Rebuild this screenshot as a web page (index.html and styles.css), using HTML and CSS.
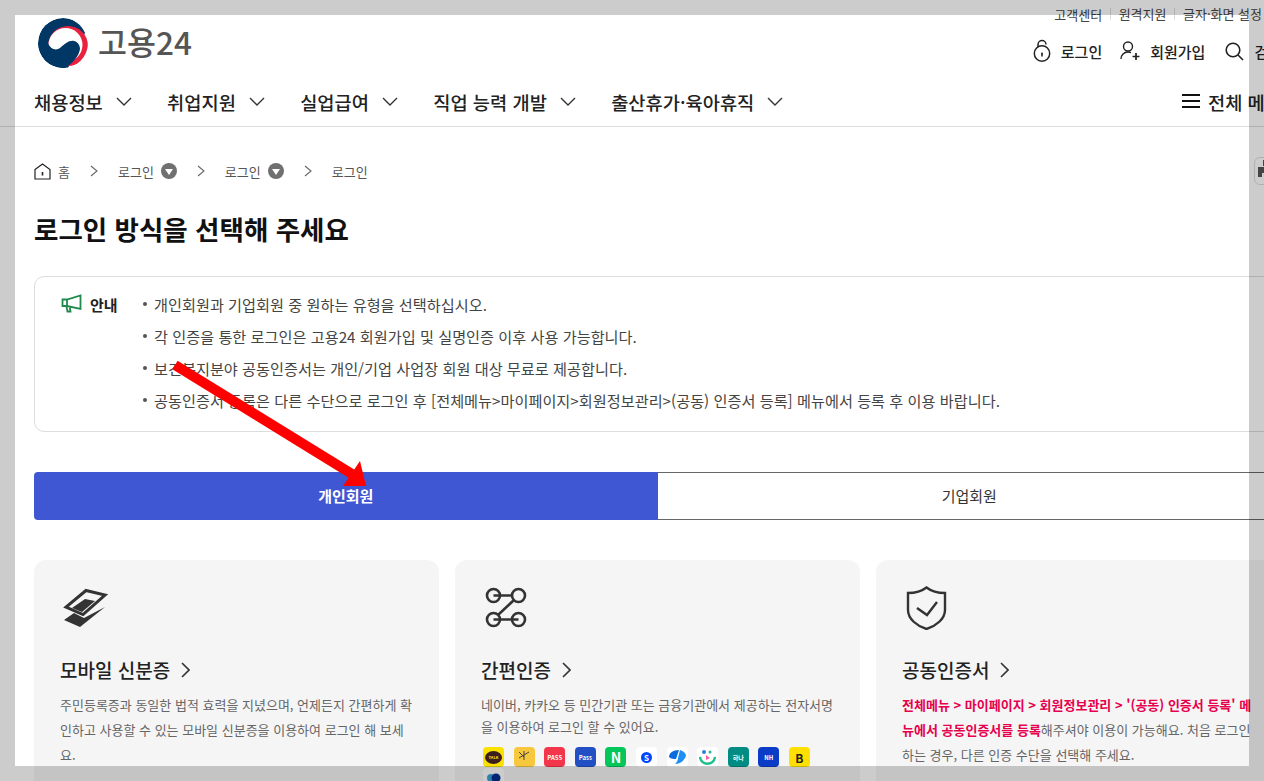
FILE: index.html
```html
<!DOCTYPE html>
<html lang="ko">
<head>
    <meta charset="utf-8">
    <title>고용24 로그인</title>
    <link rel="stylesheet" href="styles.css">
</head>
<body>
    <div class="header">
        <div class="header-inner">
            <div class="header-top">
                <a href="#" class="logo">
                    <svg class="logo-mark" width="50" height="50" viewBox="0 0 50 50">
                        <defs><clipPath id="logoDisk"><circle cx="25" cy="25" r="25"/></clipPath></defs>
                        <g clip-path="url(#logoDisk)">
                            <rect width="50" height="50" fill="#fff"/>
                            <path d="M0 25A25 25 0 0 1 25 0C35 0 43 6 47 15L30 50H25A25 25 0 0 1 0 25Z" fill="#003764"/>
                            <circle cx="30" cy="28" r="20" fill="#e8213f"/>
                            <circle cx="27.5" cy="27" r="17" fill="#fff"/>
                            <path d="M0 25H10C12 31 18 33 22 30C27 26 31 22 36 23C41 24 42 29 42 31C41 38 35 45 27 50H25A25 25 0 0 1 0 25Z" fill="#003764"/>
                        </g>
                    </svg>
                    <span class="logo-text">고용24</span>
                </a>
                <div class="header-right">
                    <ul class="util-menu">
                        <li class="util-item">고객센터</li>
                        <li class="util-item">원격지원</li>
                        <li class="util-item">글자·화면 설정</li>
                    </ul>
                    <div class="member-menu">
                        <a href="#" class="member-link">
                            <svg width="18" height="24" viewBox="0 0 18 24" fill="none" stroke="#222" stroke-width="1.5">
                                <circle cx="9" cy="14.5" r="7.7"/>
                                <path d="M5 8V5.5a4 4 0 0 1 8 0"/>
                                <circle cx="9" cy="14.5" r="1" fill="#222" stroke="none"/>
                                <path d="M9 15v2.5"/>
                            </svg>
                            로그인
                        </a>
                        <a href="#" class="member-link member-join">
                            <svg width="20" height="20" viewBox="0 0 20 20" fill="none" stroke="#222" stroke-width="1.4">
                                <circle cx="8" cy="5.5" r="4.5"/>
                                <path d="M1 18c0-4 3-7 7-7 1 0 2 .2 3 .6"/>
                                <path d="M12.5 15.5h7M16 12v7" stroke-width="1.7"/>
                            </svg>
                            회원가입
                        </a>
                        <a href="#" class="member-link member-search">
                            <svg width="19" height="19" viewBox="0 0 19 19" fill="none" stroke="#222" stroke-width="1.6">
                                <circle cx="8" cy="8" r="6.8"/>
                                <path d="M13 13l5 5"/>
                            </svg>
                            검색
                        </a>
                    </div>
                </div>
            </div>
            <div class="nav">
                <ul class="nav-menu">
                    <li class="nav-item">채용정보<svg class="nav-caret" width="16" height="9" viewBox="0 0 16 9" fill="none" stroke="#333" stroke-width="1.4"><path d="M1 1l7 7 7-7"/></svg></li>
                    <li class="nav-item">취업지원<svg class="nav-caret" width="16" height="9" viewBox="0 0 16 9" fill="none" stroke="#333" stroke-width="1.4"><path d="M1 1l7 7 7-7"/></svg></li>
                    <li class="nav-item">실업급여<svg class="nav-caret" width="16" height="9" viewBox="0 0 16 9" fill="none" stroke="#333" stroke-width="1.4"><path d="M1 1l7 7 7-7"/></svg></li>
                    <li class="nav-item">직업 능력 개발<svg class="nav-caret" width="16" height="9" viewBox="0 0 16 9" fill="none" stroke="#333" stroke-width="1.4"><path d="M1 1l7 7 7-7"/></svg></li>
                    <li class="nav-item">출산휴가·육아휴직<svg class="nav-caret" width="16" height="9" viewBox="0 0 16 9" fill="none" stroke="#333" stroke-width="1.4"><path d="M1 1l7 7 7-7"/></svg></li>
                </ul>
                <a href="#" class="nav-all">
                    <svg width="18" height="14" viewBox="0 0 18 14" stroke="#111" stroke-width="2"><path d="M0 1h18M0 7h18M0 13h18"/></svg>
                    전체 메뉴
                </a>
            </div>
        </div>
    </div>

    <div class="content">
        <div class="breadcrumb">
            <span class="crumb crumb-home">
                <svg width="17" height="17" viewBox="0 0 17 17" fill="none" stroke="#222" stroke-width="1.2">
                    <path d="M1 6.500L8.500 1 16 6.500V16H1Z"/>
                    <path d="M8.500 9v3.500" stroke-width="1.600"/>
                </svg>
                홈
            </span>
            <svg class="crumb-sep" width="8" height="12" viewBox="0 0 8 12" fill="none" stroke="#666" stroke-width="1.1"><path d="M1 1l6 5-6 5"/></svg>
            <span class="crumb">로그인<span class="crumb-drop"></span></span>
            <svg class="crumb-sep" width="8" height="12" viewBox="0 0 8 12" fill="none" stroke="#666" stroke-width="1.1"><path d="M1 1l6 5-6 5"/></svg>
            <span class="crumb">로그인<span class="crumb-drop"></span></span>
            <svg class="crumb-sep" width="8" height="12" viewBox="0 0 8 12" fill="none" stroke="#666" stroke-width="1.1"><path d="M1 1l6 5-6 5"/></svg>
            <span class="crumb">로그인</span>
            <span class="print-button">
                <svg width="24" height="24" viewBox="0 0 24 24" fill="#555">
                    <path d="M6 1h12v6H6zM1 8h22v10h-4v-4H5v4H1zM7 16h10v7H7z"/>
                </svg>
            </span>
        </div>

        <h2 class="page-title">로그인 방식을 선택해 주세요</h2>

        <div class="notice">
            <div class="notice-label">
                <svg width="21" height="20" viewBox="0 0 21 20" fill="none" stroke="#1f8a4c" stroke-width="1.800">
                    <path d="M19.500 1.500v13.500L6 12H1.500V5.500H6Z"/>
                    <path d="M6 5.500V12M5.500 12.500l1 5h3l-.7-4"/>
                </svg>
                안내
            </div>
            <ul class="notice-list">
                <li class="notice-item">개인회원과 기업회원 중 원하는 유형을 선택하십시오.</li>
                <li class="notice-item">각 인증을 통한 로그인은 고용24 회원가입 및 실명인증 이후 사용 가능합니다.</li>
                <li class="notice-item">보건복지분야 공동인증서는 개인/기업 사업장 회원 대상 무료로 제공합니다.</li>
                <li class="notice-item">공동인증서 등록은 다른 수단으로 로그인 후 [전체메뉴&gt;마이페이지&gt;회원정보관리&gt;(공동) 인증서 등록] 메뉴에서 등록 후 이용 바랍니다.</li>
            </ul>
        </div>

        <div class="tabs">
            <a href="#" class="tab tab-active">개인회원</a>
            <a href="#" class="tab">기업회원</a>
        </div>

        <div class="cards">
            <div class="card">
                <svg class="card-icon" width="50" height="44" viewBox="0 0 50 44">
                    <path d="M4 34L14 27 24 32 45 21 20 41Z" fill="#333"/>
                    <path d="M26 4.500L45 9 23 28.500 6 21Z" fill="none" stroke="#333" stroke-width="3"/>
                    <path d="M25 13L35 15 22 26 12 22Z" fill="#333"/>
                </svg>
                <div class="card-title">모바일 신분증<svg width="9" height="16" viewBox="0 0 9 16" fill="none" stroke="#333" stroke-width="1.600"><path d="M1 1l7 7-7 7"/></svg></div>
                <p class="card-text">주민등록증과 동일한 법적 효력을 지녔으며, 언제든지 간편하게 확인하고 사용할 수 있는 모바일 신분증을 이용하여 로그인 해 보세요.</p>
            </div>
            <div class="card">
                <svg class="card-icon" width="50" height="44" viewBox="0 0 50 44" fill="none" stroke="#333" stroke-width="2.600">
                    <circle cx="12.500" cy="9.500" r="6.500"/>
                    <circle cx="37.500" cy="9.500" r="6.500"/>
                    <circle cx="12.500" cy="33.500" r="6.500"/>
                    <circle cx="37.500" cy="33.500" r="6.500"/>
                    <path d="M12.500 9.500H31M33 14L17 29M12.500 33.500H37.500"/>
                </svg>
                <div class="card-title">간편인증<svg width="9" height="16" viewBox="0 0 9 16" fill="none" stroke="#333" stroke-width="1.600"><path d="M1 1l7 7-7 7"/></svg></div>
                <p class="card-text card-text-tight">네이버, 카카오 등 민간기관 또는 금융기관에서 제공하는 전자서명을 이용하여 로그인 할 수 있어요.</p>
                <div class="badges">
                    <span class="badge badge-kakao"><span class="badge-bubble">TALK</span></span>
                    <span class="badge badge-kb">
                        <svg width="15" height="15" viewBox="0 0 15 15" fill="none" stroke="#444" stroke-width="1"><path d="M2 2l5 5M7 1v9M12 2L2 8"/></svg>
                    </span>
                    <span class="badge badge-pass">PASS</span>
                    <span class="badge badge-samsung">Pass</span>
                    <span class="badge badge-naver">N</span>
                    <span class="badge badge-shinhan"><span class="badge-disc">S</span></span>
                    <span class="badge badge-white">
                        <svg width="17" height="14" viewBox="0 0 17 14"><path d="M10 0C4 0 0 3 0 7c2 2 5 2 7 2Z" fill="#0a6be0"/><path d="M11 0c3 1 6 3 6 6-2 5-6 8-11 8 2-2 3-4 3-6Z" fill="#1e90f5"/></svg>
                    </span>
                    <span class="badge badge-white">
                        <svg width="17" height="16" viewBox="0 0 17 16"><circle cx="5" cy="3" r="2" fill="#2a7de1"/><circle cx="11" cy="3" r="1.500" fill="#26b5a0"/><path d="M1 8c1 9 14 9 15 0" fill="none" stroke="#1cc08c" stroke-width="2.400"/><path d="M7 6l4 3-4 2Z" fill="#f062a0"/></svg>
                    </span>
                    <span class="badge badge-hana">하나</span>
                    <span class="badge badge-nh">NH</span>
                    <span class="badge badge-b">B</span>
                    <span class="badge badge-last">
                        <svg width="16" height="10" viewBox="0 0 16 10"><circle cx="5" cy="5" r="4" fill="#3ba3dc"/><circle cx="10" cy="5" r="4.500" fill="#00308f"/></svg>
                    </span>
                </div>
            </div>
            <div class="card">
                <svg class="card-icon" width="50" height="44" viewBox="0 0 50 44" fill="none" stroke="#333" stroke-width="2.400">
                    <path d="M24.500 1.500C29 5 35 7 43 7V24C43 33 34 40 24.500 43 15 40 6 33 6 24V7C14 7 20 5 24.500 1.500Z"/>
                    <path d="M15 22l10 7 10-13"/>
                </svg>
                <div class="card-title">공동인증서<svg width="9" height="16" viewBox="0 0 9 16" fill="none" stroke="#333" stroke-width="1.600"><path d="M1 1l7 7-7 7"/></svg></div>
                <p class="card-text"><strong class="card-strong">전체메뉴 &gt; 마이페이지 &gt; 회원정보관리 &gt; '(공동) 인증서 등록' 메뉴에서 공동인증서를 등록</strong>해주셔야 이용이 가능해요. 처음 로그인하는 경우, 다른 인증 수단을 선택해 주세요.</p>
            </div>
        </div>
    </div>

    <svg class="arrow" width="1264" height="781" viewBox="0 0 1264 781">
        <path d="M175 365L352 474" stroke="#f00" stroke-width="10" fill="none"/>
        <path d="M360 461L366 486 343 486Z" fill="#f00"/>
    </svg>

    <div class="frame frame-top"></div>
    <div class="frame frame-left"></div>
    <div class="frame frame-right"></div>
    <div class="frame frame-bottom"></div>
</body>
</html>
```

FILE: styles.css
```css
* {
    box-sizing: border-box;
}

html,
body {
    width: 1264px;
    height: 781px;
    overflow: hidden;
}

body {
    margin: 0;
    padding: 0;
    position: relative;
    background-color: #fff;
    color: #222;
    font-family: "Noto Sans CJK KR", "Noto Sans", sans-serif;
}

a {
    color: inherit;
    text-decoration: none;
}

ul {
    list-style: none;
    margin: 0;
    padding: 0;
}

.header {
    height: 127px;
    border-bottom: 1px solid #ddd;
}

.header-inner {
    width: 1248px;
    margin-left: 34px;
}

.header-top {
    display: flex;
    justify-content: space-between;
    height: 78px;
}

.logo {
    display: flex;
    align-items: center;
    height: 50px;
    margin-top: 18px;
    margin-left: 4px;
}

.logo-text {
    margin-left: 10px;
    margin-bottom: 5px;
    font-size: 31.5px;
    font-weight: 500;
    color: #555;
}

.header-right {
    display: flex;
    flex-direction: column;
    align-items: flex-end;
}

.util-menu {
    display: flex;
    align-items: center;
    height: 28px;
    padding-right: 20px;
    font-size: 13px;
    color: #444;
}

.util-item + .util-item {
    margin-left: 7.5px;
    padding-left: 8px;
    border-left: 1px solid #ddd;
    line-height: 12px;
}

.member-menu {
    display: flex;
    align-items: center;
    height: 28px;
    margin-top: 9px;
    font-size: 15px;
    font-weight: 500;
}

.member-link {
    display: flex;
    align-items: center;
    gap: 10px;
}

.member-join {
    margin-left: 18px;
}

.member-search {
    margin-left: 20px;
}

.nav {
    display: flex;
    justify-content: space-between;
    align-items: center;
    height: 48px;
    padding-bottom: 2px;
    font-size: 18.7px;
    font-weight: 500;
}

.nav-menu {
    display: flex;
    gap: 35.3px;
}

.nav-item {
    display: flex;
    align-items: center;
    gap: 13px;
}

.nav-all {
    display: flex;
    align-items: center;
    gap: 8px;
}

.content {
    width: 1248px;
    margin-left: 34px;
}

.breadcrumb {
    display: flex;
    align-items: center;
    height: 24px;
    margin-top: 32px;
    font-size: 13px;
    color: #555;
}

.crumb {
    display: flex;
    align-items: center;
    gap: 7px;
}

.crumb-sep {
    margin: 0 20px;
}

.crumb-drop {
    position: relative;
    width: 16px;
    height: 16px;
    border-radius: 50%;
    background-color: #707070;
}

.crumb-drop::after {
    content: "";
    position: absolute;
    top: 6px;
    left: 4px;
    border-top: 6px solid #fff;
    border-left: 4px solid transparent;
    border-right: 4px solid transparent;
}

.print-button {
    display: flex;
    align-items: center;
    justify-content: center;
    width: 30px;
    height: 28px;
    margin-left: auto;
    margin-right: -2px;
    border: 1px solid #ddd;
    border-radius: 6px;
}

.page-title {
    margin: 27px 0 0;
    font-size: 26.5px;
    line-height: 38px;
    font-weight: 700;
    color: #111;
}

.notice {
    display: flex;
    height: 156px;
    margin-top: 28px;
    padding: 11px 26px;
    border: 1px solid #ddd;
    border-radius: 10px;
}

.notice-label {
    display: flex;
    align-items: center;
    gap: 8px;
    width: 81px;
    height: 32px;
    font-size: 15px;
    font-weight: 700;
}

.notice-list {
    font-size: 15.2px;
    color: #444;
}

.notice-item {
    position: relative;
    height: 32px;
    line-height: 32px;
    padding-left: 12px;
    white-space: nowrap;
}

.notice-item::before {
    content: "";
    position: absolute;
    top: 14px;
    left: 1px;
    width: 4px;
    height: 4px;
    border-radius: 50%;
    background-color: #555;
}

.tabs {
    display: flex;
    height: 48px;
    margin-top: 40px;
}

.tab {
    flex: 1;
    display: flex;
    align-items: center;
    justify-content: center;
    padding-bottom: 2px;
    border: 1px solid #666;
    border-left: none;
    font-size: 15px;
    color: #333;
}

.tab-active {
    border: none;
    border-radius: 4px 0 0 4px;
    background-color: #3f57d2;
    color: #fff;
    font-weight: 700;
}

.cards {
    display: grid;
    grid-template-columns: repeat(3, 405px);
    gap: 16px;
    margin-top: 40px;
}

.card {
    height: 221px;
    padding: 26px 26px 0;
    border-radius: 12px 12px 0 0;
    background-color: #f5f5f5;
}

.card-icon {
    display: block;
}

.card-title {
    display: flex;
    align-items: center;
    gap: 11px;
    margin-top: 27px;
    font-size: 19px;
    line-height: 26px;
    font-weight: 500;
    color: #222;
}

.card-text {
    margin: 9px 0 0;
    font-size: 13px;
    line-height: 25px;
    color: #666;
    word-break: break-all;
}

.card-text-tight {
    margin-top: 11px;
    line-height: 22px;
}

.card-strong {
    color: #e6004d;
}

.badges {
    display: flex;
    flex-wrap: wrap;
    gap: 1px 9.6px;
    margin-top: 9px;
    margin-left: 2px;
    width: 340px;
}

.badge {
    display: flex;
    align-items: center;
    justify-content: center;
    width: 21px;
    height: 20px;
    border-radius: 4px;
    font-size: 6px;
    font-weight: 700;
    color: #fff;
}

.badge-kakao {
    background-color: #fae100;
}

.badge-bubble {
    display: flex;
    align-items: center;
    justify-content: center;
    width: 17px;
    height: 13px;
    border-radius: 50%;
    background-color: #3c1e1e;
    color: #fae100;
    font-size: 4px;
}

.badge-kb {
    background-color: #f7c83e;
}

.badge-pass {
    background-color: #f4364c;
}

.badge-samsung {
    background-color: #234fc4;
}

.badge-naver {
    background-color: #03c75a;
    font-size: 14px;
}

.badge-shinhan {
    background-color: #fff;
}

.badge-disc {
    display: flex;
    align-items: center;
    justify-content: center;
    width: 11px;
    height: 11px;
    border-radius: 50%;
    background-color: #0046ff;
    font-size: 8px;
}

.badge-white {
    background-color: #fff;
}

.badge-hana {
    background-color: #008c82;
}

.badge-nh {
    background-color: #0a3cc8;
}

.badge-b {
    background-color: #ffe000;
    color: #222;
    font-size: 12px;
}

.badge-last {
    background-color: #fff;
}

/* screenshot annotations that lie over the page */
.arrow {
    position: absolute;
    top: 0;
    left: 0;
}

.frame {
    position: absolute;
    background-color: rgba(0, 0, 0, 0.2);
}

.frame-top {
    top: 0;
    left: 0;
    width: 1264px;
    height: 15px;
}

.frame-left {
    top: 15px;
    left: 0;
    width: 15px;
    height: 751px;
}

.frame-right {
    top: 15px;
    left: 1249px;
    width: 15px;
    height: 751px;
}

.frame-bottom {
    top: 766px;
    left: 0;
    width: 1264px;
    height: 15px;
}
```
